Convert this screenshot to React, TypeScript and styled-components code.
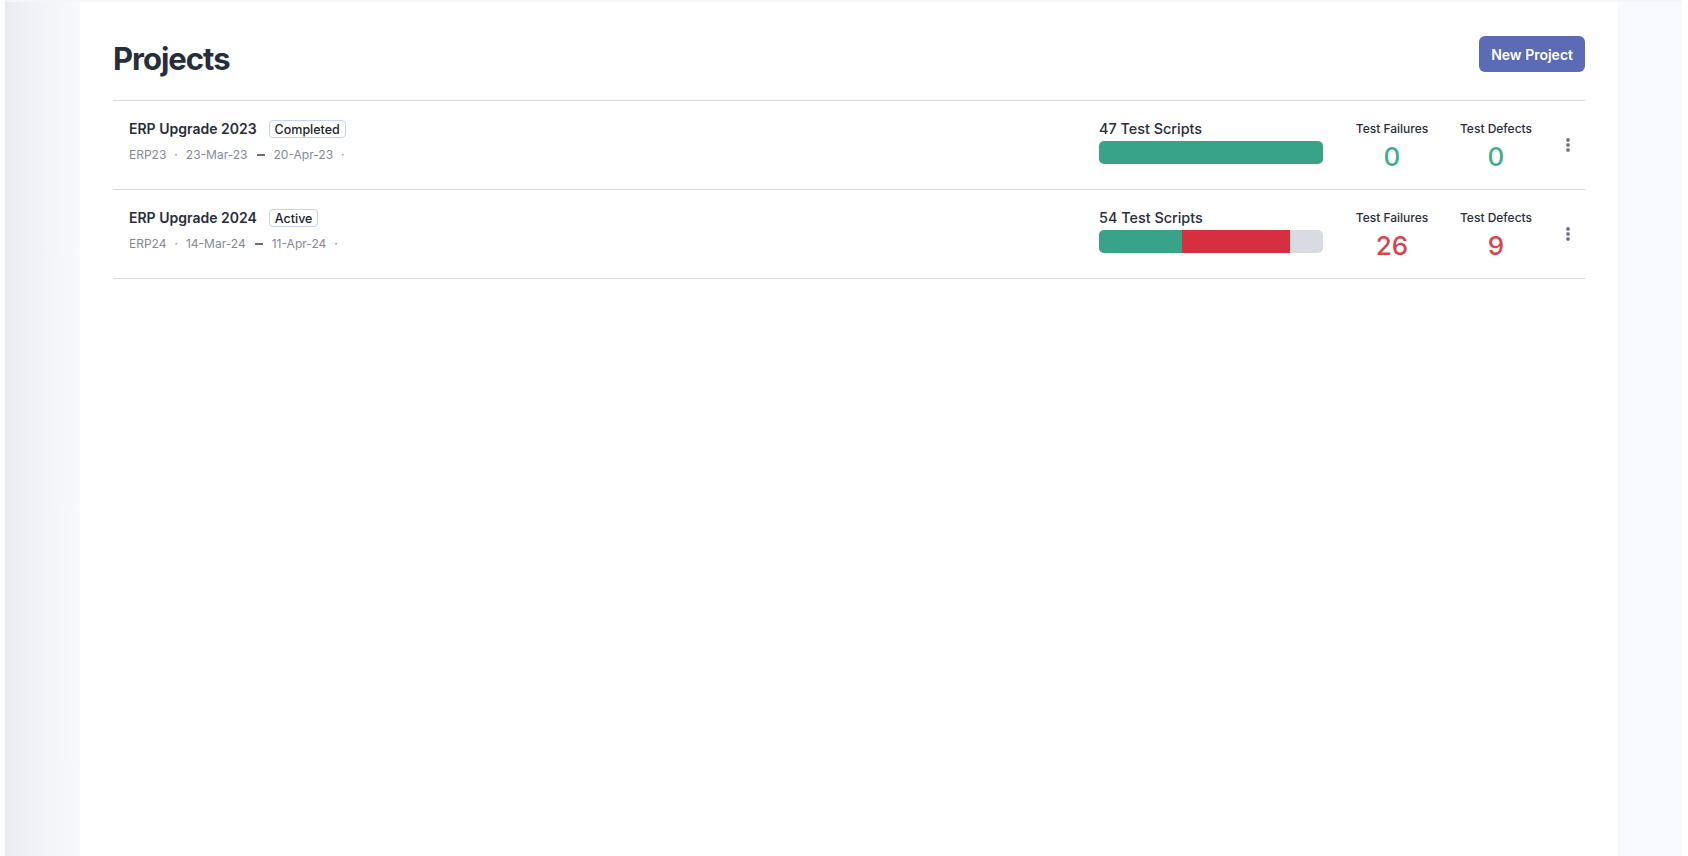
import React from 'react';
import styled, { createGlobalStyle } from 'styled-components';

const GlobalStyle = createGlobalStyle`
  html, body {
    margin: 0;
    padding: 0;
    background: #ffffff;
  }
  body {
    font-family: Inter, "Noto Sans", "Liberation Sans", sans-serif;
    color: #272b36;
  }
`;

const GREEN = '#38a386';
const RED = '#d62f40';

type Project = {
  name: string;
  status: string;
  code: string;
  start: string;
  end: string;
  scripts: number;
  passed: number;
  failed: number;
  failures: number;
  defects: number;
};

const projects: Project[] = [
  {
    name: 'ERP Upgrade 2023',
    status: 'Completed',
    code: 'ERP23',
    start: '23-Mar-23',
    end: '20-Apr-23',
    scripts: 47,
    passed: 47,
    failed: 0,
    failures: 0,
    defects: 0,
  },
  {
    name: 'ERP Upgrade 2024',
    status: 'Active',
    code: 'ERP24',
    start: '14-Mar-24',
    end: '11-Apr-24',
    scripts: 54,
    passed: 20,
    failed: 26,
    failures: 26,
    defects: 9,
  },
];

const Shell = styled.div`
  display: flex;
  height: 856px;
  padding-left: 5px;
  padding-right: 6px;
  box-sizing: border-box;
`;

const Sidebar = styled.aside`
  width: 75px;
  flex-shrink: 0;
  background: linear-gradient(to right, #e9ebf1 0%, #f1f2f7 40%, #f8f9fd 100%);
  border-top: 2px solid #f4f5f8;
`;

const Main = styled.main`
  flex: 1;
  padding: 0 32px 0 33px;
  border-top: 2px solid #f4f5f8;
`;

const RightRail = styled.aside`
  width: 65px;
  flex-shrink: 0;
  background: #f8f9fe;
  border-top: 2px solid #f4f5f8;
`;

const Header = styled.div`
  display: flex;
  justify-content: space-between;
  align-items: flex-start;
  padding-top: 34px;
  height: 64px;
  border-bottom: 1px solid #d9dbe1;
`;

const Title = styled.h1`
  margin: 3px 0 0;
  font-size: 31px;
  line-height: 40px;
  font-weight: 700;
  letter-spacing: -1px;
  color: #282d3a;
`;

const PrimaryButton = styled.button`
  height: 36px;
  padding: 0 12px;
  border: none;
  border-radius: 6px;
  background: #5b6bb5;
  color: #ffffff;
  font-family: inherit;
  font-size: 14px;
  font-weight: 600;
  cursor: pointer;
`;

const Row = styled.div`
  display: flex;
  align-items: flex-start;
  height: 89px;
  box-sizing: border-box;
  padding: 19px 7px 0 16px;
  border-bottom: 1px solid #d9dbe1;
`;

const Info = styled.div`
  flex: 1;
  margin-top: -2px;
`;

const NameLine = styled.div`
  display: flex;
  align-items: center;
  gap: 12px;
  height: 20px;
`;

const Name = styled.span`
  font-size: 14px;
  font-weight: 600;
  color: #2a2e3a;
`;

const Badge = styled.span`
  display: inline-flex;
  align-items: center;
  height: 18px;
  margin-top: 2px;
  padding: 0 5px;
  border: 1px solid #c6d3f2;
  border-radius: 4px;
  box-sizing: border-box;
  font-size: 12.5px;
  font-weight: 500;
  color: #1f2330;
`;

const Meta = styled.div`
  display: flex;
  align-items: center;
  gap: 8px;
  margin-top: 9px;
  font-size: 12px;
  line-height: 16px;
  color: #858996;
`;

const Dash = styled.span`
  display: inline-block;
  width: 8px;
  height: 1.5px;
  background: #6b6f7b;
  margin: 0 1px;
`;

const Scripts = styled.div`
  width: 224px;
  margin-right: 29px;
`;

const ScriptsLabel = styled.div`
  font-size: 14.4px;
  line-height: 18px;
  font-weight: 500;
  color: #2a2e3a;
  margin-bottom: 3px;
`;

const Bar = styled.div`
  display: flex;
  height: 23px;
  border-radius: 5px;
  overflow: hidden;
  background: #d9dbe2;
`;

const Segment = styled.div<{ $color: string }>`
  height: 100%;
  background: ${(p) => p.$color};
`;

const Stat = styled.div`
  width: 80px;
  display: flex;
  flex-direction: column;
  align-items: center;
  margin-right: 24px;
`;

const StatLabel = styled.div`
  font-size: 12px;
  line-height: 16px;
  font-weight: 500;
  color: #2a2e3a;
  white-space: nowrap;
  margin-top: 1px;
`;

const StatValue = styled.div<{ $bad: boolean }>`
  font-size: 26px;
  line-height: 30px;
  font-weight: 500;
  margin-top: 5px;
  color: ${(p) => (p.$bad ? '#d9434f' : '#3eae8c')};
`;

const Kebab = styled.button`
  align-self: center;
  margin-top: -19px;
  width: 20px;
  height: 24px;
  margin-left: -2px;
  padding: 0;
  border: none;
  background: none;
  color: #6b7080;
  display: flex;
  align-items: center;
  justify-content: center;
  cursor: pointer;
`;

function ProjectRow({ p }: { p: Project }) {
  const pass = (p.passed / p.scripts) * 100;
  const fail = (p.failed / p.scripts) * 100;
  return (
    <Row>
      <Info>
        <NameLine>
          <Name>{p.name}</Name>
          <Badge>{p.status}</Badge>
        </NameLine>
        <Meta>
          <span>{p.code}</span>
          <span>·</span>
          <span>{p.start}</span>
          <Dash />
          <span>{p.end}</span>
          <span>·</span>
        </Meta>
      </Info>
      <Scripts>
        <ScriptsLabel>{p.scripts} Test Scripts</ScriptsLabel>
        <Bar>
          <Segment $color={GREEN} style={{ width: `${pass}%` }} />
          {p.failed > 0 && <Segment $color={RED} style={{ width: `${fail}%` }} />}
        </Bar>
      </Scripts>
      <Stat>
        <StatLabel>Test Failures</StatLabel>
        <StatValue $bad={p.failures > 0}>{p.failures}</StatValue>
      </Stat>
      <Stat>
        <StatLabel>Test Defects</StatLabel>
        <StatValue $bad={p.defects > 0}>{p.defects}</StatValue>
      </Stat>
      <Kebab aria-label="More">
        <svg width="4" height="14" viewBox="0 0 4 14">
          <rect x="0.3" y="0.3" width="3.4" height="3.4" rx="1.2" fill="currentColor" />
          <rect x="0.3" y="5.3" width="3.4" height="3.4" rx="1.2" fill="currentColor" />
          <rect x="0.3" y="10.3" width="3.4" height="3.4" rx="1.2" fill="currentColor" />
        </svg>
      </Kebab>
    </Row>
  );
}

export default function App() {
  return (
    <>
      <GlobalStyle />
      <Shell>
        <Sidebar />
        <Main>
          <Header>
            <Title>Projects</Title>
            <PrimaryButton>New Project</PrimaryButton>
          </Header>
          {projects.map((p) => (
            <ProjectRow key={p.code} p={p} />
          ))}
        </Main>
        <RightRail />
      </Shell>
    </>
  );
}
